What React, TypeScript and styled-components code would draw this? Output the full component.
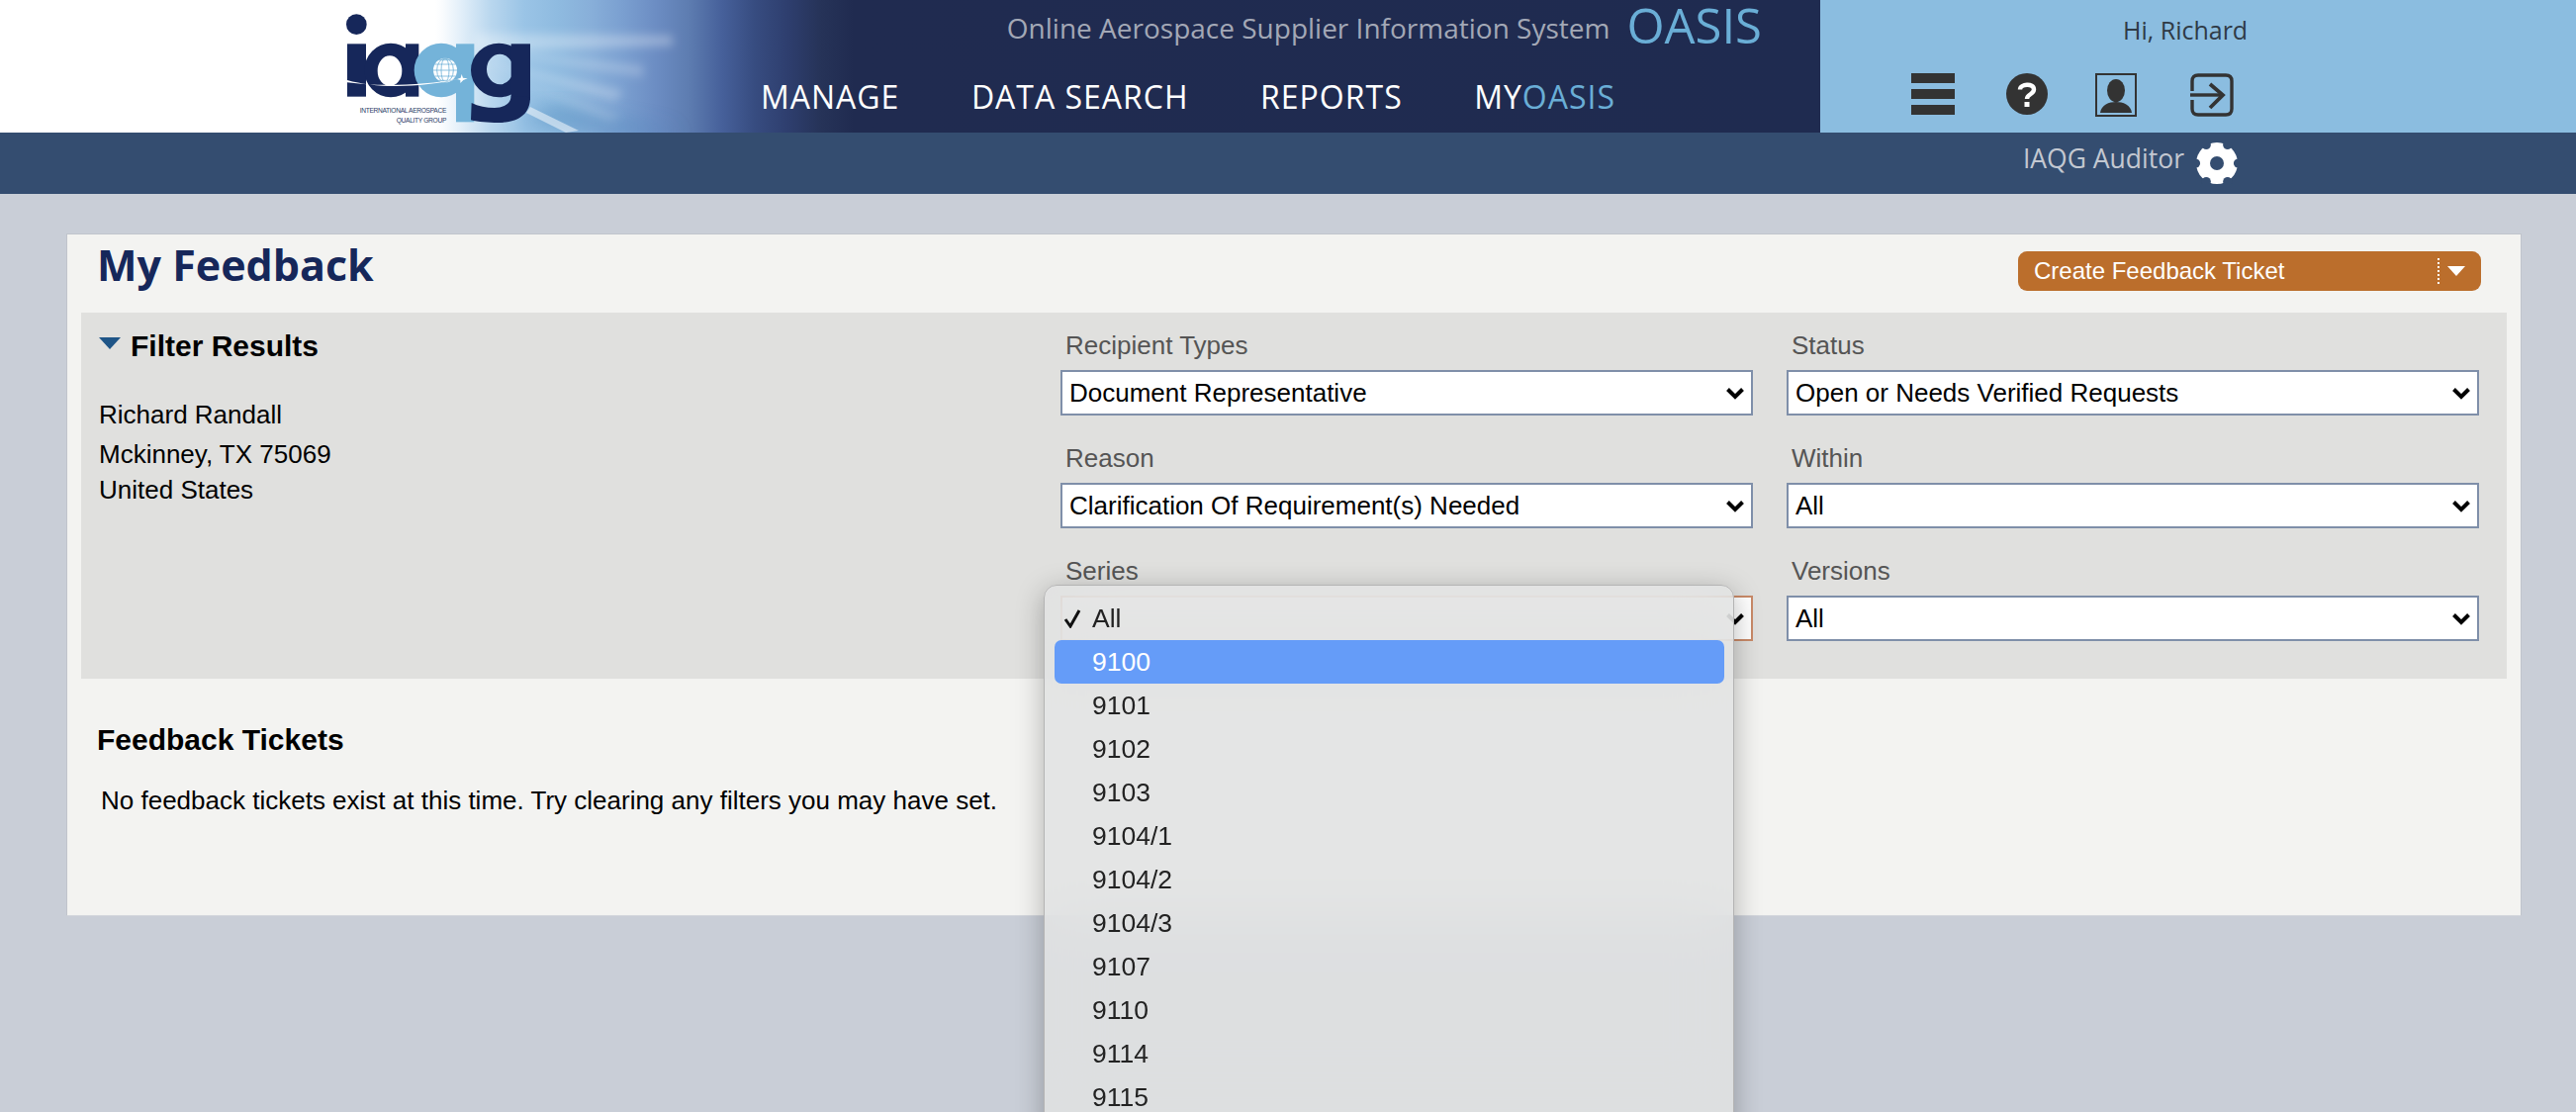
import React from 'react';
import styled, { createGlobalStyle } from 'styled-components';

const GlobalStyle = createGlobalStyle`
  html, body {
    margin: 0;
    height: 1124px;
    overflow: hidden;
    background: #c9ced7;
    font-family: "Liberation Sans", Arial, sans-serif;
  }
  * { box-sizing: border-box; }
`;

const Header = styled.header`
  display: flex;
  height: 134px;
`;

const Banner = styled.div`
  position: relative;
  flex: 1;
  display: flex;
  overflow: hidden;
  padding-left: 340px;
  background: linear-gradient(90deg, #fff 0, #fff 440px, #fafcfe 447px, #e6f1fa 463px, #b8d6ee 497px, #9ac4e6 530px, #8fbbe0 563px, #88afd9 597px, #7a9fd0 630px, #6c8dc3 663px, #5d7cb0 697px, #46609a 730px, #374c80 763px, #2e3e6e 797px, #263358 830px, #202b50 863px, #1f2b50 100%);
`;

const Rays = styled.svg`
  position: absolute;
  left: 0;
  top: 0;
`;

const LogoMark = styled.svg`
  position: relative;
  flex: none;
  display: block;
`;

const NavColumn = styled.div`
  position: relative;
  margin-left: 229px;
  width: 1012px;
  display: flex;
  flex-direction: column;
`;

const Tagline = styled.div`
  display: flex;
  justify-content: flex-end;
  align-items: center;
  gap: 17px;
  height: 56px;
  font-family: "Open Sans", sans-serif;
  font-size: 28px;
  white-space: nowrap;
  color: #a3a8b6;
`;

const Oasis = styled.span`
  font-size: 49px;
  line-height: 46px;
  color: #6aaed6;
  position: relative;
  top: -3px;
`;

const NavRow = styled.nav`
  display: flex;
  gap: 72.5px;
  height: 78px;
  padding-top: 20px;
`;

const NavLink = styled.a`
  font-family: "Open Sans", sans-serif;
  font-size: 32px;
  line-height: 44px;
  letter-spacing: 1px;
  color: #fff;
`;

const NavAccent = styled.span`
  color: #6aaed6;
`;

const UserPanel = styled.div`
  width: 764px;
  background: #8bbde0;
  display: flex;
  flex-direction: column;
  padding-left: 92px;
`;

const Greeting = styled.div`
  height: 74px;
  padding: 11px 0 0 214px;
  font-family: "Open Sans", sans-serif;
  font-size: 25px;
  line-height: 38px;
  color: #2f3a46;
`;

const IconRow = styled.div`
  display: flex;
  align-items: flex-start;
`;

const IconSlot = styled.span<{ $gap?: number }>`
  display: flex;
  margin-left: ${(p) => p.$gap ?? 0}px;
`;

const SubBar = styled.div`
  height: 62px;
  background: #344d70;
  display: flex;
  justify-content: flex-end;
  align-items: center;
  gap: 12px;
  padding-right: 342px;
  font-family: "Open Sans", sans-serif;
  font-size: 26.5px;
  color: #c3c8d1;
`;

const RoleLabel = styled.span`
  position: relative;
  top: -5px;
`;

const Card = styled.main`
  margin: 40px 55px 0 67px;
  height: 690px;
  background: #f3f3f1;
  border: 1px solid #c0c4cc;
  border-bottom-color: #d3d6dc;
`;

const TitleRow = styled.div`
  display: flex;
  justify-content: space-between;
  height: 79px;
  padding: 7px 40px 0 30px;
`;

const Title = styled.h1`
  margin: 0;
  font-family: "Open Sans", sans-serif;
  font-size: 43px;
  line-height: 48px;
  font-weight: 700;
  color: #16275a;
`;

const CreateButton = styled.button`
  width: 468px;
  height: 40px;
  margin-top: 10px;
  border: 0;
  border-radius: 9px;
  background: #bb6e2c;
  color: #fff;
  display: flex;
  align-items: center;
  padding: 0 16px;
  font-family: inherit;
  font-size: 24px;
`;

const ButtonText = styled.span`
  flex: 1;
  text-align: left;
`;

const ButtonDivider = styled.span`
  height: 26px;
  border-left: 2px dotted #fff;
  margin-right: 8px;
`;

const ButtonCaret = styled.span`
  width: 0;
  height: 0;
  border-left: 9px solid transparent;
  border-right: 9px solid transparent;
  border-top: 10px solid #fff;
`;

const FilterPanel = styled.section`
  margin: 0 14px;
  height: 370px;
  background: #e0e0de;
  display: flex;
  padding: 19px 27px 0 18px;
`;

const FilterInfo = styled.div`
  width: 972px;
  flex: none;
`;

const FilterHeading = styled.div`
  display: flex;
  align-items: center;
  gap: 10px;
  font-size: 30px;
  line-height: 30px;
  font-weight: 700;
  color: #000;
`;

const FilterCaret = styled.span`
  width: 0;
  height: 0;
  border-left: 11px solid transparent;
  border-right: 11px solid transparent;
  border-top: 12px solid #1f5587;
  position: relative;
  top: -3px;
`;

const Address = styled.div`
  margin-top: 34px;
  font-size: 26px;
  color: #000;
`;

const AddressLine = styled.div<{ $height: number }>`
  height: ${(p) => p.$height}px;
  line-height: 40px;
`;

const Fields = styled.div`
  flex: 1;
  display: grid;
  grid-template-columns: 700px 700px;
  column-gap: 34px;
  row-gap: 29px;
  align-content: start;
`;

const Field = styled.div`
  display: flex;
  flex-direction: column;
  gap: 11px;
`;

const FieldLabel = styled.label`
  padding-left: 5px;
  font-size: 26px;
  line-height: 28px;
  color: #555;
`;

const Control = styled.div`
  position: relative;
`;

const SelectBox = styled.div<{ $focused?: boolean }>`
  height: 46px;
  display: flex;
  align-items: center;
  justify-content: ${(p) => (p.$focused ? 'flex-end' : 'space-between')};
  padding: 0 7px;
  background: #fff;
  border: 2px solid ${(p) => (p.$focused ? '#c98a68' : '#7f8fa9')};
  font-size: 26px;
  color: #000;
`;

const Menu = styled.div`
  position: absolute;
  left: -17px;
  top: -11px;
  width: 698px;
  height: 560px;
  padding: 11px 9px 0 10px;
  border: 1px solid #b4b4b4;
  border-radius: 13px;
  background: rgba(225, 226, 226, 0.83);
  backdrop-filter: blur(30px);
  box-shadow: 0 6px 28px rgba(0, 0, 0, 0.28);
  overflow: hidden;
`;

const MenuItem = styled.div<{ $active?: boolean }>`
  position: relative;
  height: 44px;
  padding-left: 38px;
  border-radius: 7px;
  font-size: 26.5px;
  line-height: 44px;
  color: ${(p) => (p.$active ? '#fff' : '#222')};
  background: ${(p) => (p.$active ? '#659cf8' : 'transparent')};
`;

const CheckMark = styled.svg`
  position: absolute;
  left: 9px;
  top: 12px;
`;

const TicketsSection = styled.section`
  padding: 46px 0 0 30px;
`;

const TicketsHeading = styled.h2`
  margin: 0;
  font-size: 30px;
  line-height: 32px;
  font-weight: 700;
  color: #000;
`;

const EmptyMessage = styled.p`
  margin: 30px 0 0 4px;
  font-size: 26px;
  line-height: 30px;
  color: #000;
`;

const Chevron = () => (
  <svg width="18" height="13" viewBox="0 0 18 13">
    <path d="M1.5 2.5 L9 10 L16.5 2.5" fill="none" stroke="#000" strokeWidth="4" />
  </svg>
);

const MenuIcon = () => (
  <svg width="44" height="42" viewBox="0 0 44 42">
    <path d="M0 0h44v10H0zM0 16h44v10H0zM0 32h44v10H0z" fill="#333" />
  </svg>
);

const HelpIcon = () => (
  <svg width="42" height="42" viewBox="0 0 42 42">
    <circle cx="21" cy="21" r="21" fill="#333" />
    <path d="M14 16.5 C14 11 28 9.5 28 16.5 C28 21.5 21 21 21 26" fill="none" stroke="#fff" strokeWidth="4.4" />
    <rect x="18.5" y="29" width="5" height="5" fill="#fff" />
  </svg>
);

const PortraitIcon = () => (
  <svg width="42" height="44" viewBox="0 0 42 44">
    <rect x="1" y="1" width="40" height="42" fill="none" stroke="#333" strokeWidth="2" />
    <ellipse cx="21" cy="17.5" rx="9" ry="11.5" fill="#333" />
    <path d="M5 40 C6 32 14 29 21 29 C28 29 36 32 37 40 Z" fill="#333" />
  </svg>
);

const ExitIcon = () => (
  <svg width="44" height="44" viewBox="0 0 44 44">
    <path d="M2 18 V8 Q2 2 8 2 H36 Q42 2 42 8 V36 Q42 42 36 42 H8 Q2 42 2 36 V27" fill="none" stroke="#333" strokeWidth="3.4" />
    <path d="M0 22 H32" stroke="#333" strokeWidth="3.4" />
    <path d="M20 11 L33 22 L20 35" fill="none" stroke="#333" strokeWidth="3.8" />
  </svg>
);

const GearIcon = () => (
  <svg width="42" height="42" viewBox="0 0 42 42">
    <circle cx="21" cy="21" r="21" fill="#fff" />
    {[0, 60, 120, 180, 240, 300].map((deg) => (
      <circle
        key={deg}
        cx={21 + 21.5 * Math.cos((deg * Math.PI) / 180)}
        cy={21 + 21.5 * Math.sin((deg * Math.PI) / 180)}
        r="4.6"
        fill="#344d70"
      />
    ))}
    <circle cx="21" cy="21" r="7" fill="#344d70" />
  </svg>
);

const oval = (cx: number, cy: number, rx: number, ry: number) =>
  `M${cx - rx} ${cy}a${rx} ${ry} 0 1 0 ${2 * rx} 0a${rx} ${ry} 0 1 0 ${-2 * rx} 0Z`;

// logo is drawn in 3x units of the reference
const Logo = () => (
  <LogoMark width="200" height="134" viewBox="60 0 600 402">
    <circle cx="121" cy="74" r="31" fill="#16275a" />
    <rect x="93" y="133" width="57" height="160" fill="#16275a" />
    <path fillRule="evenodd" d={oval(225, 213, 80, 82) + oval(222, 215, 37, 46)} fill="#16275a" />
    <rect x="270" y="133" width="40" height="160" fill="#16275a" />
    <path d={oval(378, 213, 82, 82)} fill="#74b3d9" />
    <rect x="423" y="133" width="55" height="237" fill="#74b3d9" />
    <path fillRule="evenodd" d={oval(553, 213, 85, 82) + oval(556, 210, 40, 46)} fill="#16275a" />
    <rect x="590" y="133" width="58" height="170" fill="#16275a" />
    <path d="M590 290 C590 315 565 327 540 327 C515 327 490 322 470 312 L468 364 C490 370 520 372 550 372 C615 372 648 345 648 295 Z" fill="#16275a" />
    <ellipse cx="390" cy="213" rx="36" ry="37" fill="#fff" />
    <g fill="none" stroke="#74b3d9" strokeWidth="2.5">
      <ellipse cx="390" cy="213" rx="12" ry="36" />
      <ellipse cx="390" cy="213" rx="25" ry="36" />
      <path d="M354 213H426M358 195H422M358 231H422M370 182H410M370 244H410" />
    </g>
    <path d="M93 243 C180 268 310 268 440 238 C310 262 180 262 93 250 Z" fill="#fff" />
    <path d="M440 225 L444 236 L458 238 L445 243 L436 252 L436 243 L426 240 L437 236 Z" fill="#fff" />
    <text x="393" y="342" textAnchor="end" fontFamily="Liberation Sans, sans-serif" fontSize="20" letterSpacing="-1" fill="#2b3a66">INTERNATIONAL AEROSPACE</text>
    <text x="393" y="372" textAnchor="end" fontFamily="Liberation Sans, sans-serif" fontSize="20" letterSpacing="-1" fill="#2b3a66">QUALITY GROUP</text>
  </LogoMark>
);

const BannerRays = () => (
  <Rays width="900" height="134" viewBox="0 0 900 134">
    <defs>
      <filter id="soft" x="-20%" y="-80%" width="140%" height="260%">
        <feGaussianBlur stdDeviation="5" />
      </filter>
      <filter id="wide" x="-20%" y="-60%" width="140%" height="220%">
        <feGaussianBlur stdDeviation="10" />
      </filter>
    </defs>
    <path d="M520 122 L640 134 L690 134 L560 108 Z" fill="#3f7fb5" opacity="0.5" filter="url(#wide)" />
    <g filter="url(#soft)" fill="#fff">
      <path d="M480 34 L680 36 L680 46 L480 52 Z" opacity="0.3" />
      <path d="M480 50 L650 66 L650 78 Z" opacity="0.22" />
      <path d="M480 60 L630 92 L622 102 Z" opacity="0.25" />
      <path d="M510 76 L630 118 L615 122 Z" opacity="0.18" />
    </g>
    <path d="M536 108 L585 132 L572 134 L532 114 Z" fill="#fff" opacity="0.5" />
  </Rays>
);

const seriesOptions = ['9101', '9102', '9103', '9104/1', '9104/2', '9104/3', '9107', '9110', '9114', '9115'];

export default function App() {
  return (
    <>
      <GlobalStyle />
      <Header>
        <Banner>
          <BannerRays />
          <Logo />
          <NavColumn>
            <Tagline>
              Online Aerospace Supplier Information System
              <Oasis>OASIS</Oasis>
            </Tagline>
            <NavRow>
              <NavLink>MANAGE</NavLink>
              <NavLink>DATA SEARCH</NavLink>
              <NavLink>REPORTS</NavLink>
              <NavLink>
                MY<NavAccent>OASIS</NavAccent>
              </NavLink>
            </NavRow>
          </NavColumn>
        </Banner>
        <UserPanel>
          <Greeting>Hi, Richard</Greeting>
          <IconRow>
            <IconSlot>
              <MenuIcon />
            </IconSlot>
            <IconSlot $gap={52}>
              <HelpIcon />
            </IconSlot>
            <IconSlot $gap={48}>
              <PortraitIcon />
            </IconSlot>
            <IconSlot $gap={54}>
              <ExitIcon />
            </IconSlot>
          </IconRow>
        </UserPanel>
      </Header>
      <SubBar>
        <RoleLabel>IAQG Auditor</RoleLabel>
        <GearIcon />
      </SubBar>
      <Card>
        <TitleRow>
          <Title>My Feedback</Title>
          <CreateButton>
            <ButtonText>Create Feedback Ticket</ButtonText>
            <ButtonDivider />
            <ButtonCaret />
          </CreateButton>
        </TitleRow>
        <FilterPanel>
          <FilterInfo>
            <FilterHeading>
              <FilterCaret />
              Filter Results
            </FilterHeading>
            <Address>
              <AddressLine $height={40}>Richard Randall</AddressLine>
              <AddressLine $height={36}>Mckinney, TX 75069</AddressLine>
              <AddressLine $height={36}>United States</AddressLine>
            </Address>
          </FilterInfo>
          <Fields>
            <Field>
              <FieldLabel>Recipient Types</FieldLabel>
              <SelectBox>
                Document Representative
                <Chevron />
              </SelectBox>
            </Field>
            <Field>
              <FieldLabel>Status</FieldLabel>
              <SelectBox>
                Open or Needs Verified Requests
                <Chevron />
              </SelectBox>
            </Field>
            <Field>
              <FieldLabel>Reason</FieldLabel>
              <SelectBox>
                Clarification Of Requirement(s) Needed
                <Chevron />
              </SelectBox>
            </Field>
            <Field>
              <FieldLabel>Within</FieldLabel>
              <SelectBox>
                All
                <Chevron />
              </SelectBox>
            </Field>
            <Field>
              <FieldLabel>Series</FieldLabel>
              <Control>
                <SelectBox $focused>
                  <Chevron />
                </SelectBox>
                <Menu>
                  <MenuItem>
                    <CheckMark width="18" height="20" viewBox="0 0 18 20">
                      <path d="M2 11 L7 18 L16 2" fill="none" stroke="#111" strokeWidth="3" />
                    </CheckMark>
                    All
                  </MenuItem>
                  <MenuItem $active>9100</MenuItem>
                  {seriesOptions.map((option) => (
                    <MenuItem key={option}>{option}</MenuItem>
                  ))}
                </Menu>
              </Control>
            </Field>
            <Field>
              <FieldLabel>Versions</FieldLabel>
              <SelectBox>
                All
                <Chevron />
              </SelectBox>
            </Field>
          </Fields>
        </FilterPanel>
        <TicketsSection>
          <TicketsHeading>Feedback Tickets</TicketsHeading>
          <EmptyMessage>No feedback tickets exist at this time. Try clearing any filters you may have set.</EmptyMessage>
        </TicketsSection>
      </Card>
    </>
  );
}
